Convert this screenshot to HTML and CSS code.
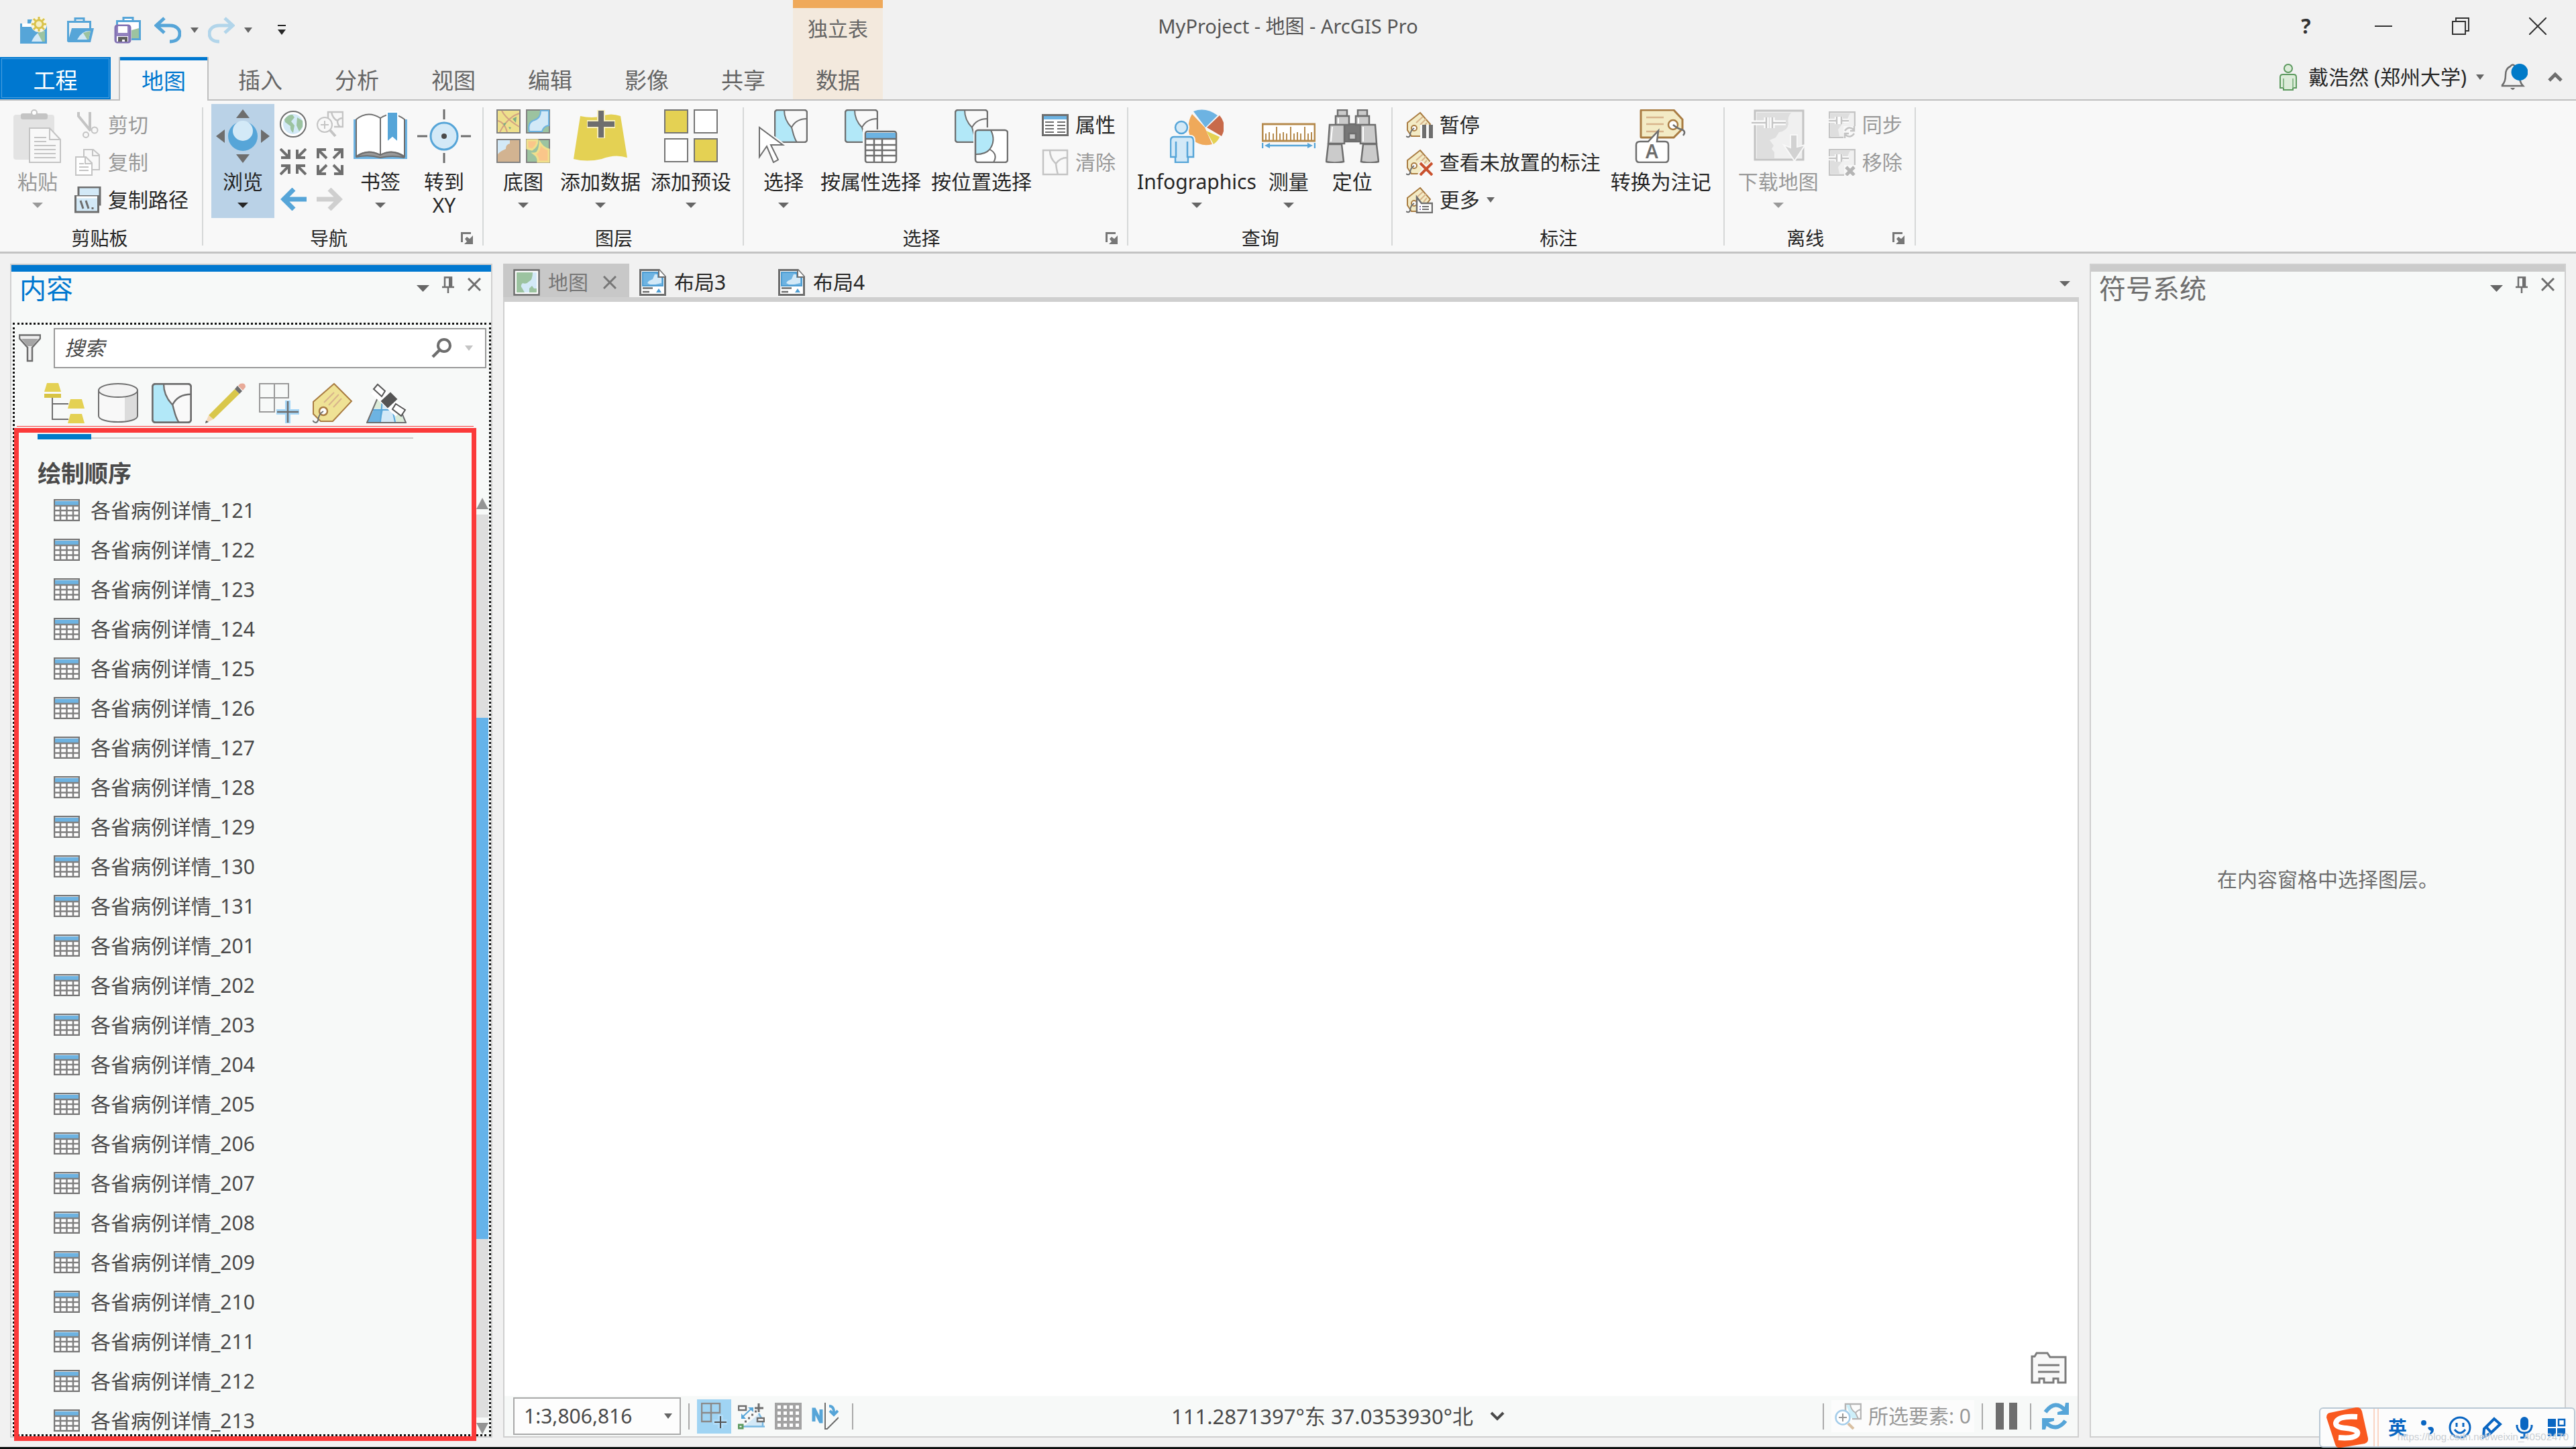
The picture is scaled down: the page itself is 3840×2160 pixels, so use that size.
FILE: index.html
```html
<!DOCTYPE html>
<html lang="zh-CN">
<head>
  <meta charset="UTF-8">
  <title>MyProject - 地图 - ArcGIS Pro</title>
  <meta name="viewport" content="width=device-width, initial-scale=1.0">
  <link rel="stylesheet" href="styles.css">
</head>
<body>
  <!-- shared icons -->
  <svg class="defs" aria-hidden="true">
    <symbol id="caret" viewBox="0 0 16 8" preserveAspectRatio="none"><path d="M0 0h16L8 8z" fill="currentColor"/></symbol>
    <symbol id="launcher" viewBox="0 0 18 18"><path d="M1.500 15V1.500H15" fill="none" stroke="#777" stroke-width="3"/><path d="M18 5v13H5l4-4-3-4 3-3 4 3z" fill="#777"/></symbol>
    <symbol id="close" viewBox="0 0 20 20"><path d="M1 1l18 18M19 1L1 19" fill="none" stroke="currentColor" stroke-width="3"/></symbol>
    <symbol id="pin" viewBox="0 0 18 25"><path d="M4 16V1.500h10V16M0 16h18M9 16v9" fill="none" stroke="#6e6e6e" stroke-width="2.500"/><path d="M10 1h5v15h-5z" fill="#6e6e6e"/></symbol>
    <symbol id="table" viewBox="0 0 39 33"><path d="M1 1h37v31H1z" fill="#fff" stroke="#757575" stroke-width="2.500"/><path d="M2 3h35v6H2z" fill="#6db3e2"/><path d="M1 10h37M1 17h37M1 24.500h37M10 10v22M19.500 10v22M29 10v22" stroke="#808080" stroke-width="2.500"/></symbol>
    <symbol id="layer" viewBox="0 0 50 50"><rect x="1" y="1" width="48" height="48" rx="4" fill="#f9f9f9"/><path d="M5 1h10c0 12 5 20 11 26 2 6 3 15 8 22H5q-4 0-4-4V5q0-4 4-4z" fill="#b2e8f8"/><path d="M15 1c0 12 5 20 11 26 2 6 3 15 8 22M26 27c4-8 12-13 23-13" fill="none" stroke="#6e6e6e" stroke-width="2"/><rect x="1" y="1" width="48" height="48" rx="4" fill="none" stroke="#6e6e6e" stroke-width="2.500"/></symbol>
    <symbol id="layer-off" viewBox="0 0 40 40"><path d="M2 2h36v36H2zM12 2q0 12 9 20 1 9 3 16M21 22q6-9 17-9" fill="none" stroke="#c4c4c4" stroke-width="2.500"/></symbol>
    <symbol id="tag" viewBox="0 0 40 40"><path d="M21 2l15 17-14 18H8l-6-9V17z" fill="#f3ebc5" stroke="#a97c42" stroke-width="2"/><path d="M15 17l10-9M21 20l9-9M26 23l5-6" stroke="#d8b48c" stroke-width="2"/><circle cx="12" cy="25" r="4" fill="#fff" stroke="#a97c42" stroke-width="2"/><path d="M12 25q-6 4-6 11-2 4-6 1" fill="none" stroke="#6e6e6e" stroke-width="2"/></symbol>
    <symbol id="layout" viewBox="0 0 40 40"><path d="M1.500 1.500h28l9 10v27h-37z" fill="#fff" stroke="#6e6e6e" stroke-width="3"/><path d="M5 5h22v8h8v12H5z" fill="#6db3e2" stroke="#4e9dd2" stroke-width="2"/><path d="M14 18l6-3 3-7h4v5h6v8l-9 2h-8l-4-2z" fill="#d3e9f7"/><path d="M29 1v11h10" fill="#fff" stroke="#6e6e6e" stroke-width="2"/><path d="M5 28.500h15M5 34h10" stroke="#6e6e6e" stroke-width="2.500"/><path d="M25 35l4-6 4 6z" fill="#4e9dd2"/></symbol>
    <symbol id="mapoff" viewBox="0 0 40 40"><path d="M1 1h38v38H1z" fill="#f0f0f0" stroke="#c4c4c4" stroke-width="2.500"/><path d="M3 3h29q-4 6-4 11l-8 5-6 8 2 10H3z" fill="#dedede"/><path d="M0 14h12M12 8v11M18 8v11M18 14h12" fill="none" stroke="#fff" stroke-width="6"/><path d="M0 14h12M12 8v11M19 8v11M19 14h11" fill="none" stroke="#c4c4c4" stroke-width="2.500"/></symbol>
  </svg>

  <header class="header">
    <div class="quick">
      <button aria-label="新建"><svg viewBox="0 0 40 40"><path d="M0 10h11V4h14v6h15v30H0z" fill="#56a5d8"/><path d="M3 10h20v5H3z" fill="#fff"/><path d="M17 37q7-16 20-16v16z" fill="#d3e9f7"/><path d="M26 24l11-3v16h-4z" fill="#9cc3a0"/><circle cx="28" cy="11" r="12" fill="#f7f5e4"/><path d="M28 0v22M17 11h22M20 3l16 16M36 3L20 19" stroke="#d9c24a" stroke-width="3"/><circle cx="28" cy="11" r="6" fill="#f4efc4" stroke="#d9c24a" stroke-width="3"/></svg></button>
      <button aria-label="打开"><svg viewBox="0 0 40 40"><path d="M1.500 37V7.500h33V18M12 7V2.500h13V7" fill="none" stroke="#56a5d8" stroke-width="3"/><path d="M7 17h33l-5 21H1z" fill="#56a5d8"/><path d="M15 34q7-14 20-13l-3 13z" fill="#d3e9f7"/><path d="M24 24l11-3-3 13h-2z" fill="#9cc3a0"/></svg></button>
      <button aria-label="保存"><svg viewBox="0 0 40 40"><path d="M4.500 14V6.500h34v27H26M14 6V1.500h14V6" fill="#fff" stroke="#56a5d8" stroke-width="3"/><path d="M26 20l11-3v15H26z" fill="#9cc3a0"/><rect x="2" y="13" width="22" height="25" rx="3" fill="#9382bf" stroke="#8271b3" stroke-width="3"/><path d="M6 14h14v10H6zM4 29h17v8H4z" fill="#fff"/><path d="M6 30h14v7h-4v-3h-4v3H6z" fill="#5e5e5e"/></svg></button>
      <button aria-label="撤消"><svg viewBox="0 0 40 40"><path d="M15 2L3 13l12 11M4 13h19c9 0 15 5 15 12s-5 12-15 12" fill="none" stroke="#56a5d8" stroke-width="5"/></svg></button>
      <svg class="caret small"><use href="#caret"/></svg>
      <button aria-label="恢复"><svg viewBox="0 0 40 40"><path d="M25 2l12 11-12 11M36 13H17C8 13 2 18 2 25s5 12 15 12" fill="none" stroke="#b2d5ea" stroke-width="5"/></svg></button>
      <svg class="caret small"><use href="#caret"/></svg>
      <button class="customize" aria-label="自定义"><svg viewBox="0 0 12 16"><path d="M0 0h12v2H0zM0 7h12l-6 8z" fill="#262626"/></svg></button>
    </div>
    <h1 class="title">MyProject - 地图 - ArcGIS Pro</h1>
    <nav class="tabs">
      <button class="tab project">工程</button>
      <button class="tab active">地图</button>
      <button class="tab">插入</button>
      <button class="tab">分析</button>
      <button class="tab">视图</button>
      <button class="tab">编辑</button>
      <button class="tab">影像</button>
      <button class="tab">共享</button>
    </nav>
    <div class="context">
      <span class="context-name">独立表</span>
      <button class="tab">数据</button>
    </div>
    <div class="window-buttons">
      <button aria-label="帮助">?</button>
      <button aria-label="最小化"><svg viewBox="0 0 26 26"><path d="M0 13h26" stroke="#333" stroke-width="2"/></svg></button>
      <button aria-label="还原"><svg viewBox="0 0 26 26"><path d="M1 6h19v19H1zM6 6V1h19v19h-5" fill="none" stroke="#333" stroke-width="2"/></svg></button>
      <button aria-label="关闭"><svg viewBox="0 0 26 26"><path d="M0 0l26 26M26 0L0 26" stroke="#333" stroke-width="2"/></svg></button>
    </div>
    <div class="account">
      <svg class="person" viewBox="0 0 26 40"><circle cx="13" cy="7" r="6" fill="#dcecd9" stroke="#5d9a5f" stroke-width="2"/><path d="M5 16h16q4 0 4 4v16h-5v3H6v-3H1V20q0-4 4-4z" fill="#dcecd9" stroke="#5d9a5f" stroke-width="2"/><path d="M6 22v14M20 22v14" stroke="#8cbb8d" stroke-width="2"/></svg>
      <button class="user">戴浩然 (郑州大学)<svg class="caret small"><use href="#caret"/></svg></button>
      <button aria-label="通知"><svg class="bell" viewBox="0 0 40 40"><path d="M2 33h31q-6-6-5-17 0-9-7-12-3-5-7 0-7 3-7 13 0 10-5 15z" fill="none" stroke="#6e6e6e" stroke-width="2.500"/><path d="M14 36h7q-3 6-7 0z" fill="#6e6e6e"/><circle cx="28" cy="12.500" r="12.500" fill="#007ac8"/></svg></button>
      <button aria-label="折叠功能区"><svg class="fold" viewBox="0 0 22 16"><path d="M2 13l9-9 9 9" fill="none" stroke="#6e6e6e" stroke-width="5"/></svg></button>
    </div>
  </header>

  <section class="ribbon">
    <div class="group">
      <div class="tools">
        <button class="big off">
          <svg viewBox="0 0 80 80"><rect x="4" y="8" width="61" height="67" rx="4" fill="#e3e3e3"/><rect x="15" y="6" width="40" height="9" rx="3" fill="#c4c4c4"/><circle cx="35" cy="5" r="4" fill="#fff" stroke="#c4c4c4" stroke-width="2"/><path d="M28 28h30l16 17v34H28z" fill="#f8f8f8" stroke="#c4c4c4" stroke-width="2"/><path d="M58 28v17h16M35 42h18M35 48h18M35 54h32M35 60h32M35 66h32M35 72h32" fill="none" stroke="#c4c4c4" stroke-width="2"/></svg>
          <span>粘贴</span><svg class="caret"><use href="#caret"/></svg>
        </button>
        <div class="stack">
          <button class="small-btn off"><svg viewBox="0 0 40 40"><path d="M6 1v6l18 22M23 1v28" fill="none" stroke="#c4c4c4" stroke-width="4"/><circle cx="17" cy="35" r="4" fill="none" stroke="#c4c4c4" stroke-width="2"/><circle cx="30" cy="28" r="4.500" fill="none" stroke="#c4c4c4" stroke-width="2"/></svg>剪切</button>
          <button class="small-btn off"><svg viewBox="0 0 40 40"><path d="M14 11V1h14l9 8v22H26M27 1v9h10" fill="none" stroke="#c4c4c4" stroke-width="2"/><path d="M2 12h15l9 9v18H2zM16 12v10h10M7 22h7M7 27h14M7 32h14" fill="#fff" stroke="#c4c4c4" stroke-width="2"/></svg>复制</button>
          <button class="small-btn"><svg viewBox="0 0 40 40"><path d="M6 1h32v26H6z" fill="#d3e9f7" stroke="#6e6e6e" stroke-width="3"/><path d="M1.500 14.500h34V38h-34z" fill="#d3e9f7" stroke="#6e6e6e" stroke-width="3"/><path d="M3 16h31" stroke="#fff" stroke-width="3"/><path d="M9 21l4 12M17 21l4 12M27 31v3" stroke="#6e6e6e" stroke-width="3"/></svg>复制路径</button>
        </div>
      </div>
      <div class="group-name">剪贴板</div>
    </div>

    <div class="group">
      <div class="tools">
        <button class="big selected">
          <svg viewBox="0 0 80 80"><path d="M40 0l10 13H30zM40 80l10-13H30zM0 40l13-10v20zM80 40L67 30v20z" fill="#6e6e6e"/><circle cx="40" cy="40" r="22" fill="#56a5d8"/><circle cx="40" cy="32" r="15" fill="#d3e9f7"/></svg>
          <span>浏览</span><svg class="caret"><use href="#caret"/></svg>
        </button>
        <div class="nav-icons">
          <button aria-label="全图"><svg viewBox="0 0 40 40"><circle cx="20" cy="20" r="19" fill="#fff" stroke="#6e6e6e" stroke-width="2"/><circle cx="20" cy="20" r="15" fill="#d3e9f7"/><path d="M7 13q6-8 12-7l3 4-5 6 5 6-2 11q-5-4-4-10l-8-6zM26 10l8 5v9l-5 7-4-9z" fill="#9cc3a0"/></svg></button>
          <button aria-label="缩放至所选"><svg viewBox="0 0 40 40"><path d="M17 14V2h22v22H26M22 2q2 10 9 13 0 6 4 9M31 15q3-4 8-4" fill="none" stroke="#c4c4c4" stroke-width="2.500"/><circle cx="12" cy="21" r="11" fill="#f8f8f8" stroke="#c4c4c4" stroke-width="2"/><path d="M6 21h12M12 15v12" stroke="#c4c4c4" stroke-width="2"/><path d="M20 29l8 9" stroke="#c4c4c4" stroke-width="4"/></svg></button>
          <button aria-label="固定放大"><svg viewBox="0 0 40 40"><path d="M1 1l12 12M14 2v12H2M39 1L27 13M26 2v12h12M1 39l12-12M2 26h12v12M39 39L27 27M38 26H26v12" fill="none" stroke="#6e6e6e" stroke-width="4"/></svg></button>
          <button aria-label="固定缩小"><svg viewBox="0 0 40 40"><path d="M3 3l12 12M2 15V2h12M37 3L25 15M26 2h12v13M3 37l12-12M2 25v13h12M37 37L25 25M26 38h12V25" fill="none" stroke="#6e6e6e" stroke-width="4"/></svg></button>
          <button aria-label="后退"><svg viewBox="0 0 40 34"><path d="M40 17H4M21 2L6 17l15 15" fill="none" stroke="#56a5d8" stroke-width="7"/></svg></button>
          <button aria-label="前进"><svg viewBox="0 0 40 34"><path d="M0 17h36M19 2l15 15-15 15" fill="none" stroke="#cfcfcf" stroke-width="7"/></svg></button>
        </div>
        <button class="big">
          <svg viewBox="0 0 80 80"><path d="M0 15h80v59H0z" fill="#6db3e2"/><path d="M4 15q17-14 36-2 18-12 36 2v55q-18-12-36-2-19-10-36 2z" fill="#fff" stroke="#6e6e6e" stroke-width="2"/><path d="M4 71q16-13 36-3 20-10 36 4-18-4-36 0-18-5-36-1z" fill="#999" stroke="#6e6e6e" stroke-width="2"/><path d="M40 13v55" stroke="#6e6e6e" stroke-width="2"/><path d="M50 4h16v45l-8-7-8 7z" fill="#56a5d8" stroke="#fff" stroke-width="2"/></svg>
          <span>书签</span><svg class="caret"><use href="#caret"/></svg>
        </button>
        <button class="big">
          <svg viewBox="0 0 80 80"><path d="M40 0v15M40 65v15M0 40h15M65 40h15" stroke="#6e6e6e" stroke-width="3"/><circle cx="40" cy="40" r="20" fill="#d3e9f7" stroke="#56a5d8" stroke-width="3"/><circle cx="40" cy="40" r="4" fill="#4a4a4a"/></svg>
          <span>转到<br>XY</span>
        </button>
      </div>
      <div class="group-name">导航<button aria-label="导航选项"><svg><use href="#launcher"/></svg></button></div>
    </div>

    <div class="group">
      <div class="tools">
        <button class="big">
          <svg viewBox="0 0 80 80"><g stroke="#808080" stroke-width="2"><path d="M1 1h34v34H1z" fill="#eee08c"/><path d="M45 1h34v34H45z" fill="#9cc3a0"/><path d="M1 45h34v34H1z" fill="#d2b391"/><path d="M45 45h34v34H45z" fill="#9cc3a0"/></g><path d="M2 17q10 2 14 17M8 2q6 12 26 24M34 6Q16 12 5 34" fill="none" stroke="#d2a382" stroke-width="2"/><path d="M24 14l6-3-1 9zM10 21l5-1-3 5zM18 26l4 1-2 3z" fill="#7fae84"/><path d="M66 2h12v22q-8 1-10 9H49q-3-14 8-17 9-3 9-14z" fill="#d3e9f7" stroke="#6db3e2" stroke-width="2"/><path d="M2 46h18v5q-6 1-6 8-8 3-12 8z" fill="#d3e9f7"/><path d="M46 46h15q0 9-8 14l-7-2zM65 50q5 8 13 10v18H62q1-7-6-12 8 0 9-16z" fill="#fac68a" stroke="#f0e08c" stroke-width="3"/></svg>
          <span>底图</span><svg class="caret"><use href="#caret"/></svg>
        </button>
        <button class="big">
          <svg viewBox="0 0 80 80"><path d="M10 10q18 4 32 0 14-5 28 0l10 62q-18-6-38 2-22 5-42 0z" fill="#e4d153"/><path d="M41 1v42M20 22h42" stroke="#f6eebd" stroke-width="12"/><path d="M41 2v40M21 22h40" stroke="#6e6e6e" stroke-width="8"/></svg>
          <span>添加数据</span><svg class="caret"><use href="#caret"/></svg>
        </button>
        <button class="big">
          <svg viewBox="0 0 80 80"><g fill="#fff" stroke="#757575" stroke-width="2"><path d="M1 1h34v34H1z" fill="#e4d153"/><path d="M45 1h34v34H45zM1 44h34v34H1z"/><path d="M45 44h34v34H45z" fill="#e4d153"/></g></svg>
          <span>添加预设</span><svg class="caret"><use href="#caret"/></svg>
        </button>
      </div>
      <div class="group-name">图层</div>
    </div>

    <div class="group">
      <div class="tools">
        <button class="big">
          <svg viewBox="0 0 80 80"><use href="#layer" x="26" y="0" width="50" height="50"/><path d="M4 27v44l11-16 10 24 7-4-11-22h18z" fill="#fff" stroke="#f8f8f8" stroke-width="6"/><path d="M4 27v44l11-16 10 24 7-4-11-22h18z" fill="#fff" stroke="#6e6e6e" stroke-width="2"/></svg>
          <span>选择</span><svg class="caret"><use href="#caret"/></svg>
        </button>
        <button class="big">
          <svg viewBox="0 0 80 80"><use href="#layer" x="1" y="0" width="50" height="50"/><rect x="28" y="30" width="52" height="50" fill="#f8f8f8"/><rect x="32" y="33" width="46" height="46" rx="3" fill="#fff" stroke="#6e6e6e" stroke-width="2.500"/><path d="M33 35h44v8H33z" fill="#6db3e2"/><path d="M32 44h46M32 53h46M32 61h46M32 69h46M45 44v35M57 44v35" stroke="#6e6e6e" stroke-width="2.500"/></svg>
          <span>按属性选择</span>
        </button>
        <button class="big">
          <svg viewBox="0 0 80 80"><use href="#layer" x="0" y="0" width="50" height="50"/><rect x="28" y="27" width="52" height="53" fill="#f8f8f8"/><rect x="31" y="31" width="48" height="48" rx="4" fill="#fff"/><path d="M32 31h22q8 16-2 29-6 7-20 7z" fill="#b2e8f8"/><path d="M54 31q8 16-2 29-6 7-20 7M53 60q12 7 5 19" fill="none" stroke="#6e6e6e" stroke-width="2"/><rect x="31" y="31" width="48" height="48" rx="4" fill="none" stroke="#6e6e6e" stroke-width="2.500"/></svg>
          <span>按位置选择</span>
        </button>
        <div class="stack">
          <button class="small-btn"><svg viewBox="0 0 40 40"><path d="M1.500 5.500h37v30h-37z" fill="#fff" stroke="#6e6e6e" stroke-width="3"/><path d="M3 7h34v5H3z" fill="#6db3e2"/><path d="M5 16h13M5 21h13M5 26h13M5 31h13M23 16h12M23 21h12M23 26h12M23 31h12" stroke="#6e6e6e" stroke-width="2"/></svg>属性</button>
          <button class="small-btn off"><svg><use href="#layer-off"/></svg>清除</button>
        </div>
      </div>
      <div class="group-name">选择<button aria-label="选择选项"><svg><use href="#launcher"/></svg></button></div>
    </div>

    <div class="group">
      <div class="tools">
        <button class="big tight">
          <svg viewBox="0 0 80 80"><path d="M53 27L35 3q18-7 36 6z" fill="#6db3e2"/><path d="M55 27L74 9q12 14 3 31z" fill="#c86a4a"/><path d="M54 32l20 9q-2 6-9 11z" fill="#e4d153"/><path d="M52 27l11 25q-20 5-33-11-6-19 3-34z" fill="#efa95a"/><g fill="#d3e9f7" stroke="#f8f8f8" stroke-width="6"><circle cx="17" cy="27" r="9"/><path d="M6 41h24q5 0 5 6v24h-8v8H8v-8H1V47q0-6 5-6z"/></g><g fill="#d3e9f7" stroke="#56a5d8" stroke-width="2.500"><circle cx="17" cy="27" r="9"/><path d="M6 41h24q5 0 5 6v24h-8v8H8v-8H1V47q0-6 5-6zM9 48v24M26 48v24"/></g></svg>
          <span>Infographics</span><svg class="caret"><use href="#caret"/></svg>
        </button>
        <button class="big">
          <svg viewBox="0 0 80 80"><path d="M1 22h78v25H1z" fill="#fff" stroke="#b58a4d" stroke-width="3"/><path d="M6 46V36M11 46V34M17 46V36M22 46V26M27 46V36M32 46V34M37 46V36M43 46V26M48 46V36M53 46V34M58 46V36M64 46V26M69 46V36M74 46V34" stroke="#b58a4d" stroke-width="2"/><path d="M1 50v8M79 50v8M8 54h64" stroke="#56a5d8" stroke-width="2.500"/><path d="M4 54l8-4v8zM76 54l-8-4v8z" fill="#56a5d8"/></svg>
          <span>测量</span><svg class="caret"><use href="#caret"/></svg>
        </button>
        <button class="big">
          <svg viewBox="0 0 80 80"><g fill="#cbcbcb" stroke="#6e6e6e" stroke-width="2.500"><path d="M28 22h24v26H28z" fill="#777"/><path d="M35 36h10v9H35zM18 1h14v9H18zM48 1h14v9H48z"/><path d="M15 10h20v13H15zM45 10h20v13H45zM6 23h22v28H4zM52 23h22l2 28H52z"/><path d="M4 52h20l3 26q-14 3-26 0zM56 52h20l3 26q-12 3-26 0z"/></g><path d="M10 26L8 48M56 26v22M19 13v8M49 13v8" stroke="#fff" stroke-width="2"/></svg>
          <span>定位</span>
        </button>
      </div>
      <div class="group-name">查询</div>
    </div>

    <div class="group">
      <div class="tools">
        <div class="stack">
          <button class="small-btn"><svg viewBox="0 0 40 40"><use href="#tag"/><path d="M21 20h19v20H21z" fill="#f8f8f8"/><path d="M24 20h6v20h-6zM34 20h6v20h-6z" fill="#6e6e6e"/></svg>暂停</button>
          <button class="small-btn"><svg viewBox="0 0 40 40"><use href="#tag"/><path d="M20 20l20 20M40 20L20 40" stroke="#f8f8f8" stroke-width="8"/><path d="M21 21l18 18M39 21L21 39" stroke="#c9512e" stroke-width="4"/></svg>查看未放置的标注</button>
          <button class="small-btn"><svg viewBox="0 0 40 40"><use href="#tag"/><path d="M16 16l7 9h16v14H16z" fill="#fff" stroke="#6e6e6e" stroke-width="2.500"/><path d="M20 30h2M20 34h2" stroke="#8271b3" stroke-width="2"/><path d="M24 30h10M24 34h10" stroke="#6e6e6e" stroke-width="2"/></svg>更多<svg class="caret small"><use href="#caret"/></svg></button>
        </div>
        <button class="big">
          <svg viewBox="0 0 80 80"><path d="M11 1h48l13 14v14L59 42H11q-1 0-1-1V2q0-1 1-1z" fill="#f3ebc5" stroke="#a97c42" stroke-width="3"/><path d="M18 12h26M18 22h26M18 33h26" stroke="#d8b48c" stroke-width="2.500"/><circle cx="58" cy="23" r="7" fill="#fff" stroke="#a97c42" stroke-width="2.500"/><path d="M58 23q7 6 13 7 7 3 2 9" fill="none" stroke="#6e6e6e" stroke-width="2.500"/><path d="M9 48h12l15-16-2 16h12q5 0 5 5v21q0 5-5 5H8q-5 0-5-5V53q0-5 6-5z" fill="#fff" stroke="#6e6e6e" stroke-width="2.500"/><text x="17" y="73" font-family="Noto Sans" font-size="28" fill="#6e6e6e" font-weight="600">A</text></svg>
          <span>转换为注记</span>
        </button>
      </div>
      <div class="group-name">标注</div>
    </div>

    <div class="group">
      <div class="tools">
        <button class="big off">
          <svg viewBox="0 0 80 80"><path d="M5 2h72v73H5z" fill="#f0f0f0" stroke="#c4c4c4" stroke-width="3"/><path d="M8 5h51q-6 6-4 17-2 10-14 12l-5 8-9 4 6 8-3 5 4 5v9H8z" fill="#dedede"/><path d="M0 20h22M22 12v16M31 12v16M31 20h20" fill="none" stroke="#fff" stroke-width="7"/><path d="M0 20h22M22 12v16M31 12v16M31 20h20" fill="none" stroke="#c4c4c4" stroke-width="2.500"/><path d="M58 38h10v18l12-3-16 24-16-24 10 4z" fill="#d2d2d2" stroke="#f8f8f8" stroke-width="2"/></svg>
          <span>下载地图</span><svg class="caret"><use href="#caret"/></svg>
        </button>
        <div class="stack">
          <button class="small-btn off"><svg viewBox="0 0 40 40"><use href="#mapoff"/><path d="M22 22h18v18H22z" fill="#f8f8f8"/><path d="M24 29q6-8 13-2M38 33q-6 8-13 2M38 22v7h-6M24 40v-7h6" fill="none" stroke="#c4c4c4" stroke-width="2.500"/></svg>同步</button>
          <button class="small-btn off"><svg viewBox="0 0 40 40"><use href="#mapoff"/><path d="M23 24h17v16H23z" fill="#f8f8f8"/><path d="M26 27l12 12M38 27L26 39" stroke="#b5b5b5" stroke-width="5"/></svg>移除</button>
        </div>
      </div>
      <div class="group-name">离线<button aria-label="离线选项"><svg><use href="#launcher"/></svg></button></div>
    </div>
  </section>

  <main class="workspace">
    <aside class="pane contents">
      <div class="pane-head">
        <h2>内容</h2>
        <svg class="caret pane-caret"><use href="#caret"/></svg>
        <button aria-label="自动隐藏"><svg class="pin"><use href="#pin"/></svg></button>
        <button aria-label="关闭"><svg class="close"><use href="#close"/></svg></button>
      </div>
      <div class="focus-box">
        <div class="search-row">
          <svg class="filter" viewBox="0 0 33 42"><path d="M1 1.500h31v5L20 20v20h-7V20L1 6.500z" fill="#eee" stroke="#6e6e6e" stroke-width="2.500"/><path d="M4 7h25l-9 11h-7z" fill="#a5a5a5"/></svg>
          <div class="search-box">
            <input type="text" placeholder="搜索" aria-label="搜索">
            <svg class="lens" viewBox="0 0 30 30"><circle cx="19" cy="11" r="9" fill="none" stroke="#6e6e6e" stroke-width="4"/><path d="M13 17L2 28" stroke="#6e6e6e" stroke-width="4.500"/></svg>
            <svg class="caret small pale"><use href="#caret"/></svg>
          </div>
        </div>
        <div class="list-modes">
          <button aria-label="按绘制顺序列出"><svg viewBox="0 0 60 60"><path d="M12 20v34h24M12 31h24" fill="none" stroke="#6e6e6e" stroke-width="2"/><path d="M4 0h17l4 13H0zM39 24h17l4 14H35zM39 46h17l4 14H35z" fill="#e4d153"/><path d="M0 16h25v6H0z" fill="#d8c445"/></svg></button>
          <button aria-label="按数据源列出"><svg viewBox="0 0 60 60"><path d="M1 11v38c0 12 58 12 58 0V11z" fill="#f8f8f8"/><path d="M40 20q14-2 19-9v38q-3 7-19 8z" fill="#dcdcdc"/><path d="M1 11v38c0 12 58 12 58 0V11" fill="none" stroke="#6e6e6e" stroke-width="2"/><ellipse cx="30" cy="11" rx="29" ry="10" fill="#f3f3f3" stroke="#6e6e6e" stroke-width="2"/></svg></button>
          <button aria-label="按选择列出"><svg><use href="#layer"/></svg></button>
          <button aria-label="按编辑列出"><svg viewBox="0 0 60 60"><path d="M44 9l7 7L12 54l-7-6z" fill="#d9c74b"/><path d="M5 48l7 6-12 6z" fill="#f4d9b8"/><path d="M1 56l4 2-5 2z" fill="#555"/><path d="M48 4l7 8-4 4-7-7z" fill="#6e6e6e"/><path d="M52 1q8-2 8 5l-4 5-7-7z" fill="#e8aa98"/></svg></button>
          <button aria-label="按捕捉列出"><svg viewBox="0 0 60 60"><path d="M1 1h43v21H1zM1 22v21h22V1M23 43V22" fill="none" stroke="#999" stroke-width="2"/><path d="M43 26v34M26 43h34" stroke="#a5d6f7" stroke-width="8"/><path d="M43 27v32M27 43h32" stroke="#6e6e6e" stroke-width="2.500"/></svg></button>
          <button aria-label="按标注列出"><svg viewBox="0 0 60 60"><path d="M32 1l26 26-28 30H12L1 46V28z" fill="#efe295" stroke="#a97c42" stroke-width="2"/><path d="M17 29l15-15M24 33l15-16M31 36l12-13" stroke="#d8b48c" stroke-width="2"/><circle cx="16" cy="42" r="6" fill="#fff" stroke="#a97c42" stroke-width="2.500"/><path d="M16 42q-7 4-8 14-3 6-8 0" fill="none" stroke="#6e6e6e" stroke-width="2"/></svg></button>
          <button aria-label="按透视影像列出"><svg viewBox="0 0 60 60"><path d="M17 22h26l16 37H1z" fill="#d3e9f7"/><path d="M11 40h14l-4 18H2z" fill="#6db3e2"/><path d="M17 22h8l-1 16H11zM41 40h8l8 18H45z" fill="#dcecd9"/><path d="M9 40h40M24 24l-3 34M39 40l4 18" stroke="#56a5d8" stroke-width="2"/><path d="M17 22L1 59h58l-8-19" fill="none" stroke="#6e6e6e" stroke-width="2"/><path d="M13 9l37 34" stroke="#fff" stroke-width="18"/><g fill="#fff" stroke="#555" stroke-width="2"><path d="M17 2l11 10-5 8-12-11zM44 31l14 9-6 9-13-10z"/><path d="M36 15l9 9-13 12-9-9z" fill="#555"/></g></svg></button>
        </div>
        <div class="mode-line"></div>
        <div class="toc">
          <div class="tree">
            <h3>绘制顺序</h3>
            <ul>
              <li><svg><use href="#table"/></svg>各省病例详情_121</li>
              <li><svg><use href="#table"/></svg>各省病例详情_122</li>
              <li><svg><use href="#table"/></svg>各省病例详情_123</li>
              <li><svg><use href="#table"/></svg>各省病例详情_124</li>
              <li><svg><use href="#table"/></svg>各省病例详情_125</li>
              <li><svg><use href="#table"/></svg>各省病例详情_126</li>
              <li><svg><use href="#table"/></svg>各省病例详情_127</li>
              <li><svg><use href="#table"/></svg>各省病例详情_128</li>
              <li><svg><use href="#table"/></svg>各省病例详情_129</li>
              <li><svg><use href="#table"/></svg>各省病例详情_130</li>
              <li><svg><use href="#table"/></svg>各省病例详情_131</li>
              <li><svg><use href="#table"/></svg>各省病例详情_201</li>
              <li><svg><use href="#table"/></svg>各省病例详情_202</li>
              <li><svg><use href="#table"/></svg>各省病例详情_203</li>
              <li><svg><use href="#table"/></svg>各省病例详情_204</li>
              <li><svg><use href="#table"/></svg>各省病例详情_205</li>
              <li><svg><use href="#table"/></svg>各省病例详情_206</li>
              <li><svg><use href="#table"/></svg>各省病例详情_207</li>
              <li><svg><use href="#table"/></svg>各省病例详情_208</li>
              <li><svg><use href="#table"/></svg>各省病例详情_209</li>
              <li><svg><use href="#table"/></svg>各省病例详情_210</li>
              <li><svg><use href="#table"/></svg>各省病例详情_211</li>
              <li><svg><use href="#table"/></svg>各省病例详情_212</li>
              <li><svg><use href="#table"/></svg>各省病例详情_213</li>
            </ul>
          </div>
          <div class="scrollbar">
            <svg viewBox="0 0 18 17"><path d="M9 0l9 17H0z" fill="#949494"/></svg>
            <div class="track"><div class="thumb"></div></div>
            <svg viewBox="0 0 18 17"><path d="M9 17l9-17H0z" fill="#949494"/></svg>
          </div>
        </div>
      </div>
      <div class="red-frame"></div>
    </aside>

    <section class="view">
      <div class="view-tabs">
        <div class="view-tab current"><svg viewBox="0 0 40 40"><path d="M1.500 1.500h37v37h-37z" fill="#fff" stroke="#6e6e6e" stroke-width="2.500"/><path d="M5 5h30v30H5z" fill="#d3e9f7"/><path d="M5 5h24q0 12-6 14-3 4-9 2-4 4-1 7l4 7H5zM24 35v-6l4-4 3 4h4v6z" fill="#9cc3a0"/></svg><a href="#map">地图</a><button aria-label="关闭"><svg class="close"><use href="#close"/></svg></button></div>
        <div class="view-tab"><svg><use href="#layout"/></svg><a href="#layout3">布局3</a></div>
        <div class="view-tab"><svg><use href="#layout"/></svg><a href="#layout4">布局4</a></div>
        <svg class="caret view-caret"><use href="#caret"/></svg>
      </div>
      <div class="map">
        <svg viewBox="0 0 54 48"><path d="M2 7h4l3-5h16l4 6h23v38H41v-6h-7v6H20v-6h-7v6H2z" fill="#f8f8f8" stroke="#7c7c7c" stroke-width="3"/><path d="M11 20h32M11 30h32" stroke="#7c7c7c" stroke-width="3"/></svg>
      </div>
      <div class="status">
        <div class="scale"><select aria-label="地图比例"><option>1:3,806,816</option></select><svg class="caret small"><use href="#caret"/></svg></div>
        <i class="sep"></i>
        <div class="status-tools">
          <button class="on" aria-label="捕捉"><svg viewBox="0 0 40 40"><path d="M1 1h27v14H1zM1 15v13h14V1M15 28V15" fill="none" stroke="#8a8a8a" stroke-width="2.500"/><path d="M29 18v20M18 29h21" stroke="#b0dcf8" stroke-width="8"/><path d="M29 20v18M20 29h18" stroke="#555" stroke-width="2"/></svg></button>
          <button aria-label="约束"><svg viewBox="0 0 40 40"><path d="M8 36l24-20 5 20z" fill="#d3e9f7"/><path d="M7 35.500h33M31 16l6 10v9" fill="none" stroke="#77b8e2" stroke-width="2.500"/><path d="M1 5h11v6H1zM29 23h10v5H29z" fill="#fff" stroke="#6e6e6e" stroke-width="2.500"/><path d="M31 1v13M25 8h13" stroke="#6e6e6e" stroke-width="3"/><path d="M7 21L20 9" stroke="#56a5d8" stroke-width="2"/><path d="M5 16v8h7zM15 7h8v7z" fill="#56a5d8"/><path d="M10 28h3M15 23h3M20 18h3M25 13h3" stroke="#6e6e6e" stroke-width="3"/><path d="M1 33h6v5H1z" fill="#fff" stroke="#5d9a5f" stroke-width="3"/></svg></button>
          <button aria-label="格网"><svg viewBox="0 0 40 40"><path d="M2 2h36v36H2zM2 11h36M2 20h36M2 29h36M11 2v36M20 2v36M29 2v36" fill="#fff" stroke="#a3a3a3" stroke-width="4"/></svg></button>
          <button aria-label="校正"><svg viewBox="0 0 40 40"><path d="M3 28V10h1l9 18h1V10" fill="none" stroke="#56a5d8" stroke-width="5"/><path d="M20 0v39h3l17-17" fill="none" stroke="#6e6e6e" stroke-width="2"/><path d="M26 5q8 0 7 12M27 12l6 6 6-6" fill="none" stroke="#56a5d8" stroke-width="4"/></svg></button>
        </div>
        <i class="sep"></i>
        <div class="coords">111.2871397°东 37.0353930°北<svg viewBox="0 0 22 14"><path d="M2 2l9 9 9-9" fill="none" stroke="#4a4a4a" stroke-width="4"/></svg></div>
        <i class="sep"></i>
        <button class="picked"><svg viewBox="0 0 40 40"><path d="M16 14V2h23v22H26" fill="none" stroke="#b5b5b5" stroke-width="2.500"/><path d="M17 3h6q1 9 8 12l2 8h-8z" fill="#cdeff9"/><path d="M23 2q1 9 8 13l4 9M31 15q3-4 8-5" fill="none" stroke="#b5b5b5" stroke-width="2"/><circle cx="12" cy="22" r="10.500" fill="#fff" stroke="#a5cdea" stroke-width="2.500"/><path d="M6 22h12M12 16v12" stroke="#999" stroke-width="2"/><path d="M20 31l8 8" stroke="#d9c0a2" stroke-width="4"/></svg>所选要素: 0</button>
        <i class="sep"></i>
        <button aria-label="暂停绘制"><svg class="pause" viewBox="0 0 32 40"><path d="M0 0h12v40H0zM20 0h12v40H20z" fill="#6e6e6e"/></svg></button>
        <i class="sep"></i>
        <button aria-label="刷新"><svg class="refresh" viewBox="0 0 40 40"><path d="M5 14q15-20 30-2M35 27q-14 18-30 2" fill="none" stroke="#56a5d8" stroke-width="6"/><path d="M40 0v18H23v-4l10-3 2-11zM0 40V23h18v4l-10 3-3 10z" fill="#56a5d8"/></svg></button>
      </div>
    </section>

    <aside class="pane symbology">
      <div class="pane-head">
        <h2>符号系统</h2>
        <svg class="caret pane-caret"><use href="#caret"/></svg>
        <button aria-label="自动隐藏"><svg class="pin"><use href="#pin"/></svg></button>
        <button aria-label="关闭"><svg class="close"><use href="#close"/></svg></button>
      </div>
      <p class="hint">在内容窗格中选择图层。</p>
    </aside>
  </main>

  <!-- input method bar floats above the window -->
  <div class="ime">
    <svg class="ime-logo" viewBox="0 0 62 60"><path d="M5 8L44 0q7-1 9 6l9 40q1 6-5 8l-36 6q-6 1-8-5L0 15q0-6 5-7z" fill="#f9591f"/><path d="M46 14q-29-2-32 9-1 7 16 8 19 2 16 9-4 7-28 5" fill="none" stroke="#fff" stroke-width="8"/></svg>
    <i class="ime-grip"></i>
    <b>英</b>
    <svg viewBox="0 0 30 34"><circle cx="9" cy="10" r="4" fill="#0a66c2"/><path d="M15 17q8-3 9 3 0 6-7 8l3-6q-4-1-5-5z" fill="#0a66c2"/></svg>
    <svg viewBox="0 0 34 34"><circle cx="17" cy="17" r="15" fill="none" stroke="#0a66c2" stroke-width="3"/><path d="M12 10v6M22 10v6M9 20q8 10 16 0" fill="none" stroke="#0a66c2" stroke-width="3"/></svg>
    <svg viewBox="0 0 34 34"><path d="M4 31l1-12L20 4l9 8-15 14zM9 17l7 8" fill="none" stroke="#0a66c2" stroke-width="4"/></svg>
    <svg viewBox="0 0 34 34"><rect x="11" y="1" width="12" height="20" rx="6" fill="#0a66c2"/><path d="M6 13v3q2 9 11 9t11-9v-3M17 25v7M11 32h12" fill="none" stroke="#0a66c2" stroke-width="3"/></svg>
    <svg viewBox="0 0 34 34"><path d="M4 4h12v12H4zM4 18h12v12H4zM18 18h12v12H18z" fill="#0a66c2"/><path d="M20 5h9v9h-9z" fill="none" stroke="#0a66c2" stroke-width="2.500"/></svg>
    <span class="watermark">https://blog.csdn.net/weixin_40502470</span>
  </div>
</body>
</html>
```
FILE: styles.css
```css
* { box-sizing: border-box; }
body { margin: 0; height: 100vh; display: flex; flex-direction: column; overflow: hidden; background: #f1f1f1; color: #262626; font: 30px/40px "Noto Sans", "Noto Sans CJK SC", sans-serif; border-bottom: 3px solid #0c0f0f; }
button { font: inherit; color: inherit; background: none; border: 0; padding: 0; display: flex; align-items: center; }
a { color: inherit; text-decoration: none; }
h1, h2, h3, p, ul { margin: 0; padding: 0; font-weight: normal; }
svg { display: block; flex: none; }
.defs { position: absolute; width: 0; height: 0; }
.caret { width: 16px; height: 8px; color: #666; }
.caret.small { width: 12px; height: 8px; }
.caret.pale { color: #c4c4c4; }

/* title bar and tabs */
.header { display: grid; grid-template-columns: auto auto 1fr; grid-template-rows: 85px 63px; flex: none; border-bottom: 2px solid #bfbfbf; }
.quick { grid-area: 1 / 1; display: flex; align-items: center; padding: 4px 0 0 30px; z-index: 1; }
.quick button { margin-right: 30px; }
.quick button:nth-of-type(n+3) { margin-right: 20px; }
.quick button:nth-of-type(n+4) { margin-right: 14px; }
.quick button svg { width: 40px; height: 40px; }
.quick .caret { margin-right: 14px; }
.quick .customize { margin-left: 24px; }
.quick .customize svg { width: 12px; height: 16px; }
.title { grid-area: 1 / 1 / 2 / -1; font-size: 29px; line-height: 78px; text-align: center; color: #555; }
.tabs { grid-area: 2 / 1; display: flex; gap: 10px; padding-right: 7px; }
.tab { width: 134px; height: 63px; justify-content: center; font-size: 33px; color: #666; padding-top: 6px; }
.tab.project { width: 165px; margin-right: 2px; background: #0078d0; color: #fff; outline: 1px solid #4ba0de; outline-offset: -3px; }
.tab.active { height: 65px; margin-bottom: -2px; background: #f8f8f8; color: #0078d0; border: solid #bfbfbf; border-width: 0 2px; box-shadow: inset 0 5px #0078d0; }
.context { grid-area: 1 / 2 / 3 / 3; display: flex; flex-direction: column; justify-content: space-between; background: #f3e9dd; border-top: 12px solid #efa95a; z-index: 1; }
.context-name { text-align: center; line-height: 62px; color: #666; }
.window-buttons { grid-area: 1 / 3; justify-self: end; display: flex; padding-bottom: 8px; z-index: 1; }
.window-buttons button { width: 115px; justify-content: center; font-weight: bold; color: #333; }
.window-buttons svg { width: 26px; height: 26px; }
.account { grid-area: 2 / 3; justify-self: end; display: flex; align-items: center; padding: 0 20px 4px 0; }
.person { width: 26px; height: 40px; margin-right: 17px; }
.user .caret { margin: 0 25px 0 14px; }
.bell { width: 40px; height: 40px; margin-right: 30px; }
.fold { width: 22px; height: 16px; }

/* ribbon */
.ribbon { flex: none; display: flex; height: 228px; background: #f8f8f8; border-bottom: 3px solid #c3c3c3; padding: 5px 0 3px; }
.group { display: flex; flex-direction: column; justify-content: space-between; padding: 0 12px; background: linear-gradient(#d6d8d8, #d6d8d8) right 5px / 2px 206px no-repeat; }
.group:first-child { padding: 0 15px 0 9px; }
.group:nth-child(n+5) { padding: 0 13px; }
.tools { display: flex; gap: 1px; }
.big { flex-direction: column; height: 170px; padding: 8px 7px 0; }
.big.tight { padding: 8px 0 0; }
.big > svg:first-child { width: 80px; height: 80px; }
.big span { margin-top: 10px; line-height: 35px; }
.big .caret { margin-top: 14px; }
.selected { background: #bad2e7; }
.selected .caret { color: #262626; }
.off, .off .caret { color: #999; }
.stack { padding-top: 3px; }
.small-btn { height: 56px; padding: 0 7px; gap: 10px; }
.small-btn > svg:first-child { width: 40px; height: 40px; }
.nav-icons { display: grid; grid-template-columns: 40px 40px; grid-auto-rows: 56px; column-gap: 15px; padding: 2px 7px 0; align-items: center; }
.nav-icons svg { width: 40px; height: 40px; }
.nav-icons button:nth-child(n+5) svg { height: 34px; }
.group-name { display: grid; grid-auto-flow: column; grid-template-columns: 1fr; align-items: center; text-align: center; font-size: 28px; line-height: 34px; }
.group-name button { width: 44px; justify-content: flex-end; padding-right: 4px; }
.group-name svg { width: 18px; height: 18px; }

/* workspace */
.workspace { flex: 1; min-height: 0; display: grid; grid-template-columns: 719px minmax(0, 1fr) 710px; grid-template-rows: minmax(0, 1fr); gap: 16px; padding: 15px 15px 14px; }
.pane { position: relative; display: flex; flex-direction: column; border: 2px solid #cfcfcf; background: #f7f9f8; min-height: 0; }
.pane-head { display: flex; align-items: center; height: 86px; padding: 0 15px 26px 12px; border-top: 10px solid #cbcbcb; color: #6e6e6e; }
.contents .pane-head { border-color: #0078d0; }
.pane-head h2 { flex: 1; font-size: 40px; line-height: 50px; }
.pane-head button { margin-bottom: 12px; }
.contents h2 { color: #0078d0; }
.pane-caret { width: 19px; height: 10px; margin-right: 19px; }
.pin { width: 18px; height: 25px; margin-right: 20px; }
.close { width: 20px; height: 20px; }
.focus-box { flex: 1; min-height: 0; display: flex; flex-direction: column; border: 3px dotted #111; margin-left: 2px; color: #4a4a4a; }
.search-row { display: flex; align-items: center; gap: 19px; padding: 5px 4px 0 6px; }
.filter { width: 33px; height: 42px; }
.search-box { flex: 1; display: flex; align-items: center; height: 60px; border: 2px solid #999; background: #fff; padding: 0 18px 0 14px; }
.search-box input { flex: 1; min-width: 0; border: 0; padding: 0; background: none; font: inherit; font-style: italic; }
.search-box input::placeholder { color: #4a4a4a; }
.lens { width: 30px; height: 30px; margin-right: 20px; }
.list-modes { display: flex; gap: 20px; padding: 22px 0 16px 44px; }
.list-modes svg { width: 60px; height: 60px; }
.mode-line { width: 560px; height: 8px; flex: none; margin-left: 34px; background: linear-gradient(#007ac8, #007ac8) left / 80px 8px no-repeat, linear-gradient(#cbcbcb, #cbcbcb) left 5px / 560px 2px no-repeat; }
.toc { flex: 1; min-height: 0; display: flex; }
.tree { flex: 1; overflow: hidden; padding: 26px 0 0 34px; }
.tree h3 { font-size: 35px; line-height: 50px; font-weight: bold; }
.tree ul { list-style: none; }
.tree li { display: flex; align-items: center; gap: 16px; height: 59px; padding-left: 24px; }
.tree li svg { width: 39px; height: 33px; }
.scrollbar { width: 18px; display: flex; flex-direction: column; gap: 8px; padding-top: 87px; margin-right: 1px; }
.scrollbar svg { width: 18px; height: 17px; }
.track { flex: 1; display: flex; flex-direction: column; background: #dedede; }
.track::before { content: ""; flex: 303; }
.track::after { content: ""; flex: 266; }
.thumb { flex: 777; background: #65b3ea; }
.red-frame { position: absolute; inset: 243px 22px -7px 4px; border: 7px solid #fb3a3a; pointer-events: none; }
.red-frame::before { content: ""; position: absolute; inset: -10px -3px auto; height: 1px; background: #fb3a3a; }

/* map view */
.view { display: flex; flex-direction: column; min-width: 0; }
.view-tabs { display: flex; height: 57px; border-bottom: 7px solid #cfcfcf; padding-right: 13px; }
.view-tab { display: flex; align-items: center; width: 207px; padding: 6px 0 0 15px; gap: 12px; }
.view-tab > svg { width: 40px; height: 40px; }
.view-tab.current { width: 188px; background: #c8c8c8; color: #777; }
.view-tab button { margin-left: 10px; }
.view-caret { margin: 26px 0 0 auto; }
.map { flex: 1; display: flex; justify-content: flex-end; align-items: flex-end; padding: 18px 16px; background: #fff; border: solid #cfcfcf; border-width: 0 2px; }
.map svg { width: 54px; height: 48px; }
.status { display: flex; align-items: center; height: 62px; padding: 0 13px; background: #f7f9f8; border: 2px solid #cfcfcf; border-top: 0; color: #4a4a4a; }
.scale { display: flex; align-items: center; width: 250px; height: 56px; border: 2px solid #a9a9a9; background: #fdfdfd; padding: 0 11px 0 14px; }
.scale select { flex: 1; min-width: 0; appearance: none; border: 0; padding: 0; background: none; font: inherit; color: inherit; }
.sep { width: 2px; height: 39px; background: #a9a9a9; margin: 0 11px; }
.status-tools { display: flex; gap: 4px; padding-right: 4px; }
.status-tools button { width: 51px; height: 51px; justify-content: center; }
.status-tools svg { width: 40px; height: 40px; }
.on { background: #a0d4f3; }
.coords { flex: 1; display: flex; align-items: center; justify-content: center; gap: 25px; font-size: 31px; }
.coords svg { width: 22px; height: 14px; }
.picked { background: #fcfcfc; color: #999; gap: 10px; padding: 4px 5px; }
.picked svg { width: 40px; height: 40px; }
.pause { width: 32px; height: 40px; margin: 0 8px; }
.refresh { width: 40px; height: 40px; margin-left: 5px; }

.hint { margin: auto; color: #6e6e6e; }
.ime { position: absolute; right: 1px; bottom: 2px; display: flex; align-items: center; gap: 14px; height: 60px; padding: 0 9px; background: #fcfcfc; border: 2px solid #b9c8d4; border-radius: 6px; color: #0a66c2; }
.ime svg { width: 34px; height: 34px; }
.ime .ime-logo { width: 62px; height: 60px; }
.ime b { font-size: 28px; }
.ime-grip { width: 8px; height: 56px; border: solid #fbd5c5; border-width: 0 2px; margin-left: -6px; }
.watermark { position: absolute; right: 8px; bottom: 4px; font: 15px/20px "Liberation Sans", sans-serif; color: #c9ced3; text-shadow: 0 0 2px #fff; }
```
